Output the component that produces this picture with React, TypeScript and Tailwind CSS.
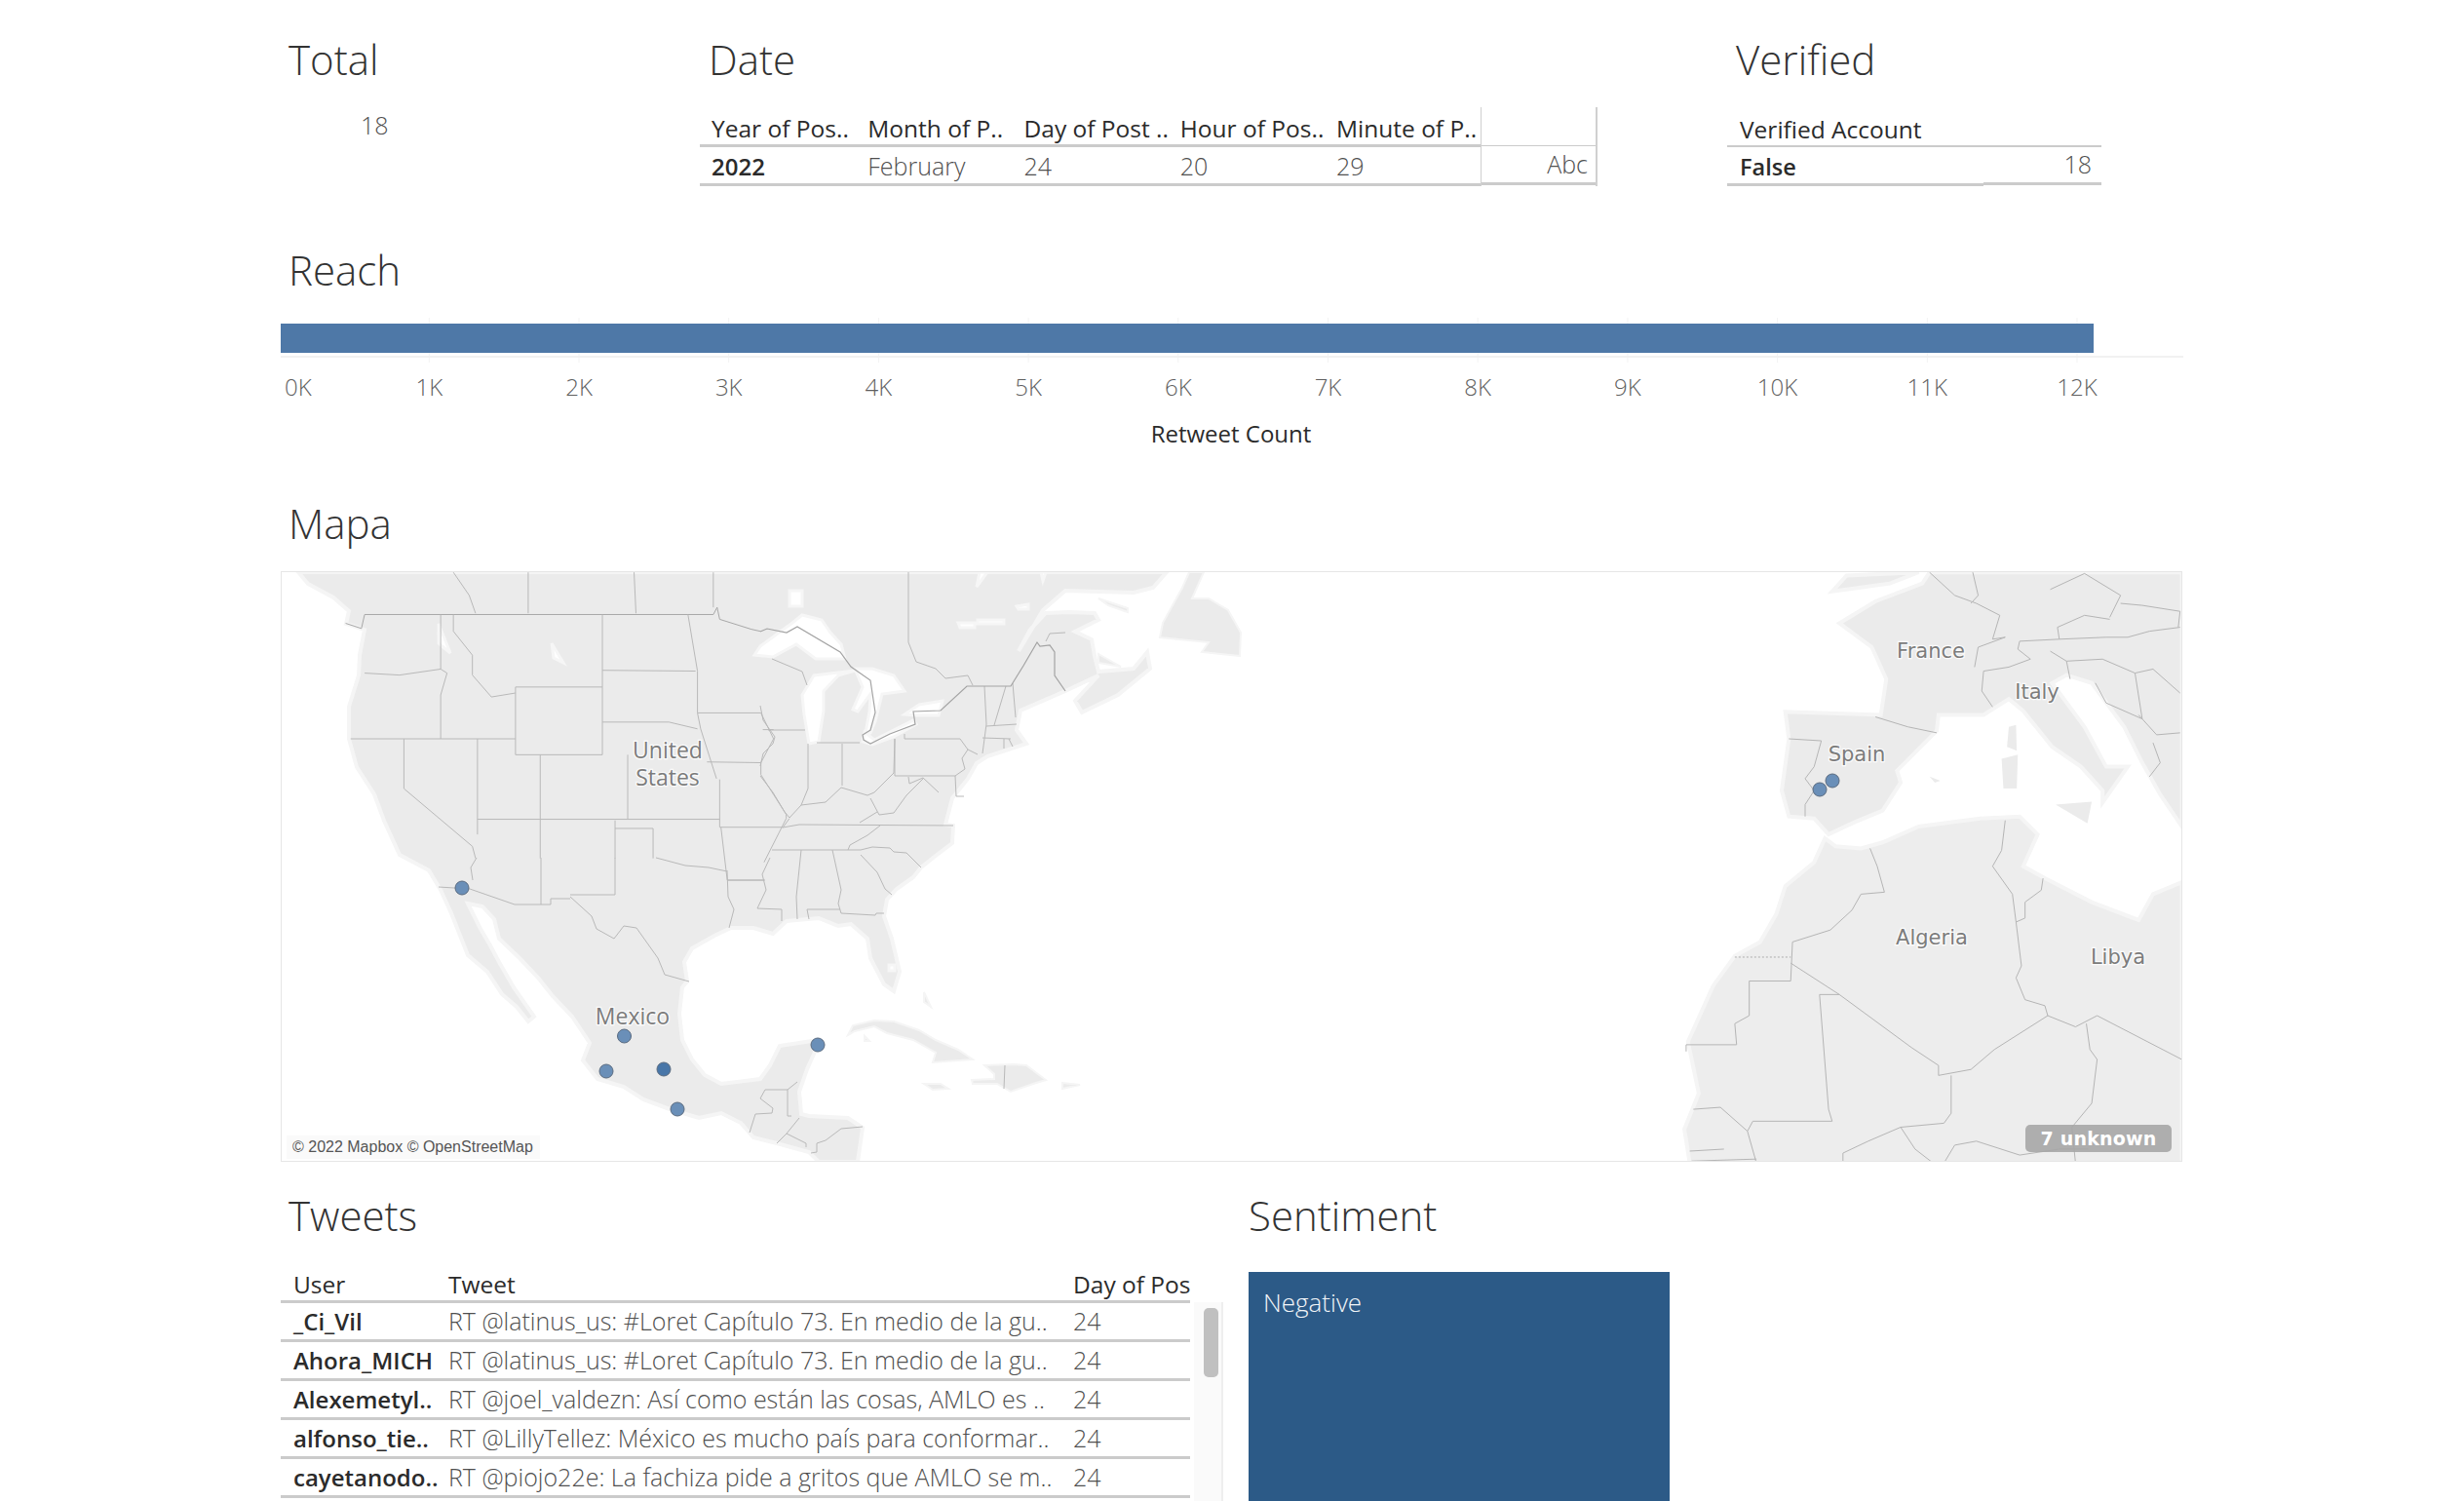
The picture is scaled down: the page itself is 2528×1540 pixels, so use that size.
import React from "react";

const tweets = [
  { user: "_Ci_Vil", text: "RT @latinus_us: #Loret Capítulo 73. En medio de la gu.." },
  { user: "Ahora_MICH", text: "RT @latinus_us: #Loret Capítulo 73. En medio de la gu.." },
  { user: "Alexemetyl..", text: "RT @joel_valdezn: Así como están las cosas, AMLO es .." },
  { user: "alfonso_tie..", text: "RT @LillyTellez: México es mucho país para conformar.." },
  { user: "cayetanodo..", text: "RT @piojo22e: La fachiza pide a gritos que AMLO se m.." },
];

const ticks = ["1K", "2K", "3K", "4K", "5K", "6K", "7K", "8K", "9K", "10K", "11K", "12K"];

const dateHeaders = ["Year of Pos..", "Month of P..", "Day of Post ..", "Hour of Pos..", "Minute of P.."];

// land, lakes and borders below are in page coordinates
const naLand =
  "M306,587 L316,599 L342,613 L358,627 L355,640 L374,646 L369,672 L368,693 L358,725 L358,758 L366,787 L384,815 L394,842 L410,877 L440,893 L452,913 L463,937 L480,980 L500,997 L515,1020 L530,1033 L542,1048 L548,1043 L527,1013 L512,987 L503,970 L493,953 L480,927 L495,930 L507,943 L512,963 L533,983 L552,1003 L567,1022 L587,1043 L605,1070 L598,1088 L613,1107 L640,1115 L660,1128 L687,1138 L717,1147 L740,1142 L760,1152 L773,1167 L797,1173 L830,1182 L840,1192 L880,1192 L885,1157 L870,1147 L830,1145 L822,1143 L820,1120 L828,1097 L837,1077 L833,1068 L800,1073 L790,1093 L780,1107 L740,1112 L723,1103 L710,1087 L700,1067 L697,1040 L700,1013 L705,1007 L702,987 L710,973 L733,960 L750,952 L773,952 L793,958 L807,945 L840,942 L860,950 L873,948 L890,963 L893,983 L907,1010 L917,1017 L923,997 L915,963 L907,940 L910,923 L920,912 L937,900 L945,890 L960,878 L977,865 L978,847 L970,846 L977,819 L993,799 L1002,783 L1013,776 L1053,763 L1043,749 L1047,729 L1093,709 L1127,693 L1103,719 L1110,731 L1147,713 L1180,686 L1177,669 L1163,686 L1127,689 L1123,673 L1120,656 L1103,648 L1127,636 L1123,629 L1097,628 L1073,629 L1057,646 L1045,668 L1060,643 L1070,626 L1093,606 L1163,608 L1183,603 L1197,587 Z";
const naIslands = [
  "M1220,587 L1213,603 L1193,639 L1190,654 L1240,659 L1233,669 L1272,673 L1273,649 L1260,626 L1240,614 L1223,614 L1235,587 Z",
  "M1127,614 L1157,624 L1157,628 L1137,621 Z",
  "M1127,671 L1150,684 L1127,680 Z",
  "M870,1062 L875,1052 L897,1047 L917,1048 L943,1057 L960,1067 L983,1077 L998,1087 L957,1090 L960,1080 L937,1067 L910,1060 L897,1053 L877,1058 Z",
  "M1010,1093 L1040,1092 L1053,1093 L1073,1108 L1060,1112 L1037,1120 L1023,1112 L998,1112 L997,1108 L1020,1107 L1020,1102 Z",
  "M948,1112 L965,1112 L973,1117 L957,1118 Z",
  "M1090,1111 L1108,1113 L1090,1117 Z",
  "M948,1018 L955,1033 L948,1028 Z",
  "M887,1063 L892,1068 L887,1068 Z",
].join(" ");
const naLakes = [
  "M774,672 L780,663 L813,639 L823,631 L843,636 L852,649 L863,661 L867,676 L837,676 L817,661 L793,674 Z",
  "M825,733 L830,763 L840,761 L845,729 L845,709 L860,693 L877,688 L835,693 L823,713 Z",
  "M877,686 L895,686 L917,693 L928,709 L905,712 L898,740 L893,752 L888,752 L892,730 L893,712 L880,730 L875,728 L885,705 Z",
  "M887,751 L885,761 L895,764 L917,756 L940,743 L937,739 L913,751 L897,759 Z",
  "M928,733 L943,723 L967,719 L963,734 L940,734 Z",
  "M810,606 L823,606 L823,622 L810,622 Z M983,639 L1000,639 L1000,644 L985,644 Z M1043,622 L1055,620 L1055,625 L1045,625 Z M1003,636 L1030,636 L1030,640 L1003,640 Z M1002,602 L1013,587 L1005,587 Z M1068,587 L1073,587 L1070,596 Z",
  "M912,990 L918,990 L918,996 L912,996 Z",
  "M450,640 L462,670 L450,660 Z M566,660 L578,680 L568,675 Z",
].join(" ");

// traced against the top-left crop, mapped with the transform on the group
const naLinesCrop = [
  "M130,170 L155,183 L160,148 L710,148 L716,130 L720,160 L770,185 L784,190",
  "M418,42 L418,145 M585,42 L588,145 M710,42 L710,130 M300,42 L325,100 L335,145",
  "M160,295 L215,300 L280,285 L290,295 L280,350 L280,460 M280,148 L280,285 M300,148 L300,190 L330,250 L330,300 L360,355 L398,345",
  "M398,330 L535,330 M398,330 L398,500 L535,500 M535,148 L535,500 M535,288 L682,290 M535,418 L640,418 L685,435 M670,148 L685,290 L685,395 L690,435 L715,560",
  "M138,460 L398,460 M222,460 L222,585 L330,730 L335,760 M338,460 L338,700 M437,500 L437,760 M575,500 L575,662 M338,662 L720,662",
  "M555,665 L555,760 M555,685 L615,685 L615,760 M720,562 L720,682 L820,682 L830,660 M722,682 L732,815 L790,815",
  "M685,395 L785,395 M805,437 L788,437 M700,518 L785,520 M785,395 L805,460 L785,520 L785,550 L825,650 L825,660 L790,770",
];
const naLinesPage = [
  "M780,724 L783,739 L795,756 L793,763 L783,773 L780,786 M788,749 L826,749 M829,763 L829,809 L822,826 M838,762 L882,762 M864,763 L864,806",
  "M780,796 L793,813 L805,833 L810,839 L822,826 L847,823 L863,808 L890,816 L897,813 L917,793 L918,758 L918,796 L980,796 L990,789 L987,778 L993,769 L985,758 L928,758 L928,753",
  "M792,676 L823,689 L828,703 M932,587 L932,659 L940,679 L960,686 L970,696 L993,693 L998,703 M1073,658 L1077,650 L1093,649",
  "M1010,704 L1012,743 L1008,773 M993,769 L1003,774 M1032,704 L1020,744 M1039,701 L1042,736 M1012,745 L1043,743 M1008,757 L1037,758 M1030,758 L1030,768 M1035,758 L1039,766",
  "M980,796 L981,817 L989,817 M932,797 L933,804 L947,798 L963,813 M947,799 L930,816 L917,834 L902,836 L893,819 M900,833 L882,844",
  "M803,849 L820,846 L978,847 M903,847 L890,857 L872,867 L870,872 M792,872 L883,872 L895,869 L913,870 L917,874 L930,875 L945,890 M883,877 L900,895 L908,912 L915,918",
  "M854,872 L863,913 L860,927 L863,937 L898,939 L899,937 L907,937 M822,872 L817,920 L818,943 M828,933 L862,933 M828,933 L830,943",
  "M746,903 L785,903 M746,893 L747,920 L753,933 L748,952 M790,880 L782,897 L786,913 L777,932 L802,933 L802,945 M673,880 L703,888 L727,890 L746,894",
  "M555,880 L555,928 M631,880 L631,918 L585,918 M585,922 L565,922 L565,928 L528,928 L482,912 L450,910",
  "M585,920 L607,940 L612,953 L630,963 L640,950 L653,952 L675,983 L682,1000 L707,1007 M489,880 L483,890 L485,903",
  "M785,1118 L808,1118 L808,1145 L812,1145 M785,1118 L780,1127 L793,1137 L792,1142 L775,1143 L769,1162 M808,1118 L818,1110 M820,1147 L807,1163 L797,1173 M807,1163 L827,1173 L827,1177 M885,1156 L863,1158 L847,1170 L838,1173 L838,1182 L832,1183 M1031,1093 L1030,1117",
];
const usCanada =
  "M780,648 L787,645 L807,649 L818,643 L862,669 L873,684 L893,698 L898,731 L893,749 L885,754 L886,759 L893,763 L913,753 L939,743 L937,730 L965,729 L992,704 L1037,704 L1050,683 L1064,659 L1067,663 L1077,662 L1082,669 L1082,693 L1093,709";

const euLand =
  "M810,42 L790,70 L660,115 L560,170 L650,230 L690,310 L675,400 L410,392 L420,460 L400,590 L420,655 L490,660 L530,700 L600,670 L680,640 L730,570 L720,540 L830,440 L835,400 L960,400 L1030,360 L1070,390 L1150,480 L1230,530 L1290,590 L1290,620 L1360,530 L1300,530 L1240,430 L1150,320 L1190,300 L1260,320 L1350,430 L1400,520 L1450,600 L1510,680 L1510,42 Z M540,90 L580,50 L780,42 L700,70 Z";
const afLand =
  "M1510,820 L1430,850 L1390,915 L1260,870 L1130,810 L1070,780 L1110,700 L1060,655 L950,660 L780,680 L680,720 L620,735 L550,730 L520,710 L490,770 L410,830 L385,900 L340,970 L270,1005 L210,1080 L140,1220 L170,1350 L130,1440 L145,1525 L1510,1525 Z";
const euIslands =
  "M1030,430 L1050,425 L1052,490 L1025,480 Z M1010,510 L1055,500 L1052,585 L1015,585 Z M1160,625 L1260,618 L1248,672 Z M810,555 L840,565 L825,570 Z";
const euLines = [
  "M660,405 L750,430 L830,445 M420,460 L510,465 L490,530 L465,560 L490,590 L465,625 L465,655",
  "M810,42 L880,100 L940,120 L1005,150 L985,210 M930,42 L945,100 L925,120 M985,210 L1020,205 L945,230 L935,280 M960,290 L1030,280 L1090,260 L1055,235 L1060,215 L1170,210 L1300,205",
  "M1170,210 L1165,180 L1240,150 L1310,160 M1145,85 L1240,45 L1340,100 L1310,155 M1340,120 L1400,125 L1505,140 L1500,180 M1300,205 L1360,205 L1420,190 L1505,180 M1145,240 L1190,265 L1290,260 M1190,265 L1200,310 M1290,260 L1380,295 L1430,285 L1505,345",
  "M1270,320 L1300,370 L1400,410 L1380,295 M1390,400 L1440,450 L1505,445 M1430,470 L1450,520 L1420,555 M960,290 L955,340 L985,380",
  "M645,735 L665,780 L685,845 L620,850 L595,890 L535,940 L430,970 L425,1068 L310,1068 L310,1155 L270,1175 L275,1228 L135,1228 L135,1245",
  "M425,1023 L560,1102 L760,1235 L835,1280 L835,1305 L925,1290 L990,1240 L1138,1155",
  "M1020,665 L1010,740 L985,780 L1040,850 L1050,920 L1065,1030 L1050,1060 L1075,1115 L1130,1130 L1138,1155 L1215,1183 L1275,1155 L1510,1265",
  "M1125,810 L1120,840 L1075,870 L1075,910 L1050,920",
  "M505,1102 L560,1102 M505,1102 L530,1390 L540,1420 L320,1420 L305,1445 L230,1385 L155,1390",
  "M870,1305 L870,1400 L850,1425 L730,1435 L640,1470 L570,1500 L570,1525 M1245,1175 L1255,1240 L1275,1265 L1260,1375 L1205,1435 L1215,1525",
  "M730,1435 L770,1490 L820,1525 M850,1525 L880,1480 L940,1470 L1060,1505 L1170,1490 L1250,1490 M305,1445 L330,1525 M145,1495 L240,1490 M150,1520 L330,1515",
];

const markers = [
  { x: 474, y: 911 },
  { x: 640.5, y: 1063 },
  { x: 622, y: 1099 },
  { x: 681, y: 1097, dark: true },
  { x: 695, y: 1138 },
  { x: 839, y: 1072 },
  { x: 1867, y: 810 },
  { x: 1880, y: 801 },
];

const labels = [
  { t: "United", x: 685, y: 769, sans: true },
  { t: "States", x: 685, y: 797, sans: true },
  { t: "Mexico", x: 649, y: 1042, sans: true },
  { t: "France", x: 1981, y: 668 },
  { t: "Italy", x: 2090, y: 710 },
  { t: "Spain", x: 1905, y: 774 },
  { t: "Algeria", x: 1982, y: 962 },
  { t: "Libya", x: 2173, y: 982 },
];

function Title({ children, className = "" }: { children: React.ReactNode; className?: string }) {
  return <h2 className={`h-[50px] leading-[50px] text-[42px] font-light text-[#333] whitespace-nowrap ${className}`}>{children}</h2>;
}

function MapPanel() {
  return (
    <svg viewBox="289 587 1949 604" className="block w-full h-full">
      <path d={naLand} fill="#ebebeb" stroke="#f5f5f5" strokeWidth="4" />
      <path d={naIslands} fill="#ebebeb" stroke="#f5f5f5" strokeWidth="2" />
      <path d={naLakes} fill="#ffffff" stroke="#f6f6f6" strokeWidth="3" />
      <g transform="translate(270 570) scale(0.6505 0.4087)">
        {naLinesCrop.map((d, i) => (
          <path key={i} d={d} fill="none" stroke={i === 0 ? "#a8a8a8" : "#b9b9b9"} strokeWidth="1" vectorEffect="non-scaling-stroke" />
        ))}
      </g>
      {naLinesPage.map((d, i) => (
        <path key={i} d={d} fill="none" stroke="#b9b9b9" strokeWidth="1" />
      ))}
      <path d={usCanada} fill="none" stroke="#a3a3a3" strokeWidth="1.2" />
      <g transform="translate(1680 570) scale(0.3699 0.4087)">
        <path d={euLand} fill="#ebebeb" stroke="#f5f5f5" strokeWidth="4" vectorEffect="non-scaling-stroke" />
        <path d={afLand} fill="#ededed" stroke="#f5f5f5" strokeWidth="4" vectorEffect="non-scaling-stroke" />
        <path d={euIslands} fill="#ebebeb" />
        {euLines.map((d, i) => (
          <path key={i} d={d} fill="none" stroke="#b5b5b5" strokeWidth="1" vectorEffect="non-scaling-stroke" />
        ))}
        <path d="M270,1008 L425,1008" fill="none" stroke="#adadad" strokeWidth="1" strokeDasharray="2 2" vectorEffect="non-scaling-stroke" />
      </g>
      {labels.map((l) => (
        <text
          key={l.t}
          x={l.x}
          y={l.y}
          textAnchor="middle"
          dominantBaseline="central"
          fill="#7c7c7c"
          stroke="#ffffff"
          strokeWidth="2.5"
          strokeOpacity="0.8"
          className={l.sans ? "[paint-order:stroke] text-[23px] font-['Open_Sans',sans-serif]" : "[paint-order:stroke] text-[21px] font-['DejaVu_Sans',sans-serif]"}
        >
          {l.t}
        </text>
      ))}
      {markers.map((m, i) => (
        <circle key={i} cx={m.x} cy={m.y} r="7" fill={m.dark ? "#4876a8" : "#6a8fb8"} stroke="#5a6b80" strokeWidth="1" />
      ))}
    </svg>
  );
}

export default function App() {
  return (
    <div className="w-[2528px] h-[1540px] overflow-hidden bg-white pl-[288px] pr-[288px] text-[#333] font-['Open_Sans',sans-serif]">
      {/* top row */}
      <div className="flex h-[252px] pt-[36px]">
        <div className="w-[430px]">
          <Title className="pl-[8px]">Total</Title>
          <div className="mt-[24px] pl-[82px] h-[40px] text-[25px] leading-[36px] font-light text-[#4f4f4f]">18</div>
        </div>
        <div className="w-[1054px]">
          <Title className="pl-[9px]">Date</Title>
          <div className="mt-[24px] flex">
            <div className="w-[801px]">
              <div className="flex h-[41px] items-end border-b-[3px] border-[#cbcbcb] pl-[12px]">
                {dateHeaders.map((h) => (
                  <div key={h} className="w-[160.25px] shrink-0 text-[24.5px] leading-[32px] font-medium whitespace-nowrap text-[#2b2b2b]">{h}</div>
                ))}
              </div>
              <div className="flex h-[40px] items-center border-b-[3px] border-[#cbcbcb] pl-[12px] pt-[3px] text-[25px] font-light text-[#4f4f4f]">
                <div className="w-[160.25px] shrink-0 text-[24px] font-semibold text-[#2b2b2b]">2022</div>
                <div className="w-[160.25px] shrink-0">February</div>
                <div className="w-[160.25px] shrink-0">24</div>
                <div className="w-[160.25px] shrink-0">20</div>
                <div className="w-[160.25px] shrink-0">29</div>
              </div>
            </div>
            <div className="w-[120px] border-l border-r-2 border-[#d0d0d0]">
              <div className="h-[40px] border-b border-[#cbcbcb]" />
              <div className="h-[40px] border-b-[3px] border-[#cbcbcb] pr-[8px] text-right text-[25px] leading-[36px] font-light text-[#4f4f4f]">Abc</div>
            </div>
          </div>
        </div>
        <div className="w-[384px]">
          <Title className="pl-[9px]">Verified</Title>
          <div className="mt-[24px]">
            <div className="h-[41px] flex items-end border-b-2 border-[#cbcbcb] pl-[13px] text-[24.5px] leading-[32px] font-medium text-[#2b2b2b]">Verified Account</div>
            <div className="flex h-[40px]">
              <div className="w-[263px] border-b-[3px] border-[#cbcbcb] pl-[13px] text-[23.5px] leading-[40px] font-semibold text-[#2b2b2b]">False</div>
              <div className="flex-1 h-[39px] border-b-[3px] border-[#cbcbcb] pr-[10px] text-right text-[25px] leading-[35px] font-light text-[#4f4f4f]">18</div>
            </div>
          </div>
        </div>
      </div>

      {/* reach */}
      <div className="h-[260px]">
        <Title className="pl-[8px]">Reach</Title>
        <div className="relative mt-[24px] h-[46px] w-[1952px]">
          <svg className="absolute inset-0" width="1952" height="46">
            {ticks.map((t, i) => (
              <line key={t} x1={152.3 + i * 153.7} x2={152.3 + i * 153.7} y1="0" y2="46" stroke="#f3f3f3" />
            ))}
          </svg>
          <div className="relative pt-[6px]">
            <div className="h-[30px] w-[1860px] bg-[#4e78a7]" />
            <div className="mt-[3px] h-[2px] bg-[#f1f1f1]" />
          </div>
        </div>
        <div className="mt-[9px] flex h-[32px] items-center text-[24px] font-light text-[#5f5f5f]">
          <div className="w-[75.5px] shrink-0 pl-[4px]">0K</div>
          {ticks.map((t) => (
            <div key={t} className="w-[153.7px] shrink-0 text-center">{t}</div>
          ))}
        </div>
        <div className="mt-[16px] w-[1950px] text-center text-[24px] leading-[32px] font-medium text-[#2b2b2b]">Retweet Count</div>
      </div>

      {/* map */}
      <Title className="pl-[8px]">Mapa</Title>
      <div className="relative mt-[24px] h-[606px] w-[1951px] border border-[#e6e6e6]">
        <MapPanel />
        <div className="absolute left-[5px] bottom-[2px] w-[260px] bg-[#f9f9f9]/80 pl-[6px] h-[24px] leading-[24px] text-[16px] text-[#555] font-['Liberation_Sans',sans-serif] whitespace-nowrap">© 2022 Mapbox © OpenStreetMap</div>
        <div className="absolute right-[10px] bottom-[9px] h-[28px] w-[150px] rounded-[5px] bg-[#a6a6a6]/90 text-center text-[19px] leading-[28px] font-bold tracking-[0.2px] text-white font-['DejaVu_Sans',sans-serif]">7 unknown</div>
      </div>

      {/* bottom row */}
      <div className="mt-[30px] flex">
        <div className="w-[993px]">
          <Title className="pl-[8px]">Tweets</Title>
          <div className="mt-[28px] flex">
            <div className="w-[933px] overflow-hidden">
              <div className="flex h-[37px] items-end border-b-[3px] border-[#cbcbcb] text-[24.5px] leading-[32px] font-medium text-[#2b2b2b]">
                <div className="w-[172px] shrink-0 pl-[13px]">User</div>
                <div className="w-[641px] shrink-0">Tweet</div>
                <div className="whitespace-nowrap">Day of Post</div>
              </div>
              {tweets.map((r) => (
                <div key={r.user} className="flex h-[40px] items-center border-b-[3px] border-[#cbcbcb] text-[25px]">
                  <div className="w-[172px] shrink-0 pl-[13px] text-[24px] font-semibold text-[#2b2b2b] whitespace-nowrap">{r.user}</div>
                  <div className="w-[641px] shrink-0 font-light text-[#4f4f4f] whitespace-nowrap overflow-hidden">{r.text}</div>
                  <div className="font-light text-[#4f4f4f]">24</div>
                </div>
              ))}
            </div>
            <div className="ml-[4px] mt-[36px] h-[204px] w-[30px] border-r-2 border-[#eeeeee] bg-[#fafafa] pl-[10px] pt-[6px]">
              <div className="h-[71px] w-[15px] rounded-[5px] bg-[#c0c0c0]" />
            </div>
          </div>
        </div>
        <div className="w-[432px]">
          <Title>Sentiment</Title>
          <div className="mt-[33px] h-[300px] bg-[#2c5a87] pl-[15px] pt-[15px] text-[26px] leading-[32px] font-light text-[#f2f5f8]">Negative</div>
        </div>
      </div>
    </div>
  );
}
